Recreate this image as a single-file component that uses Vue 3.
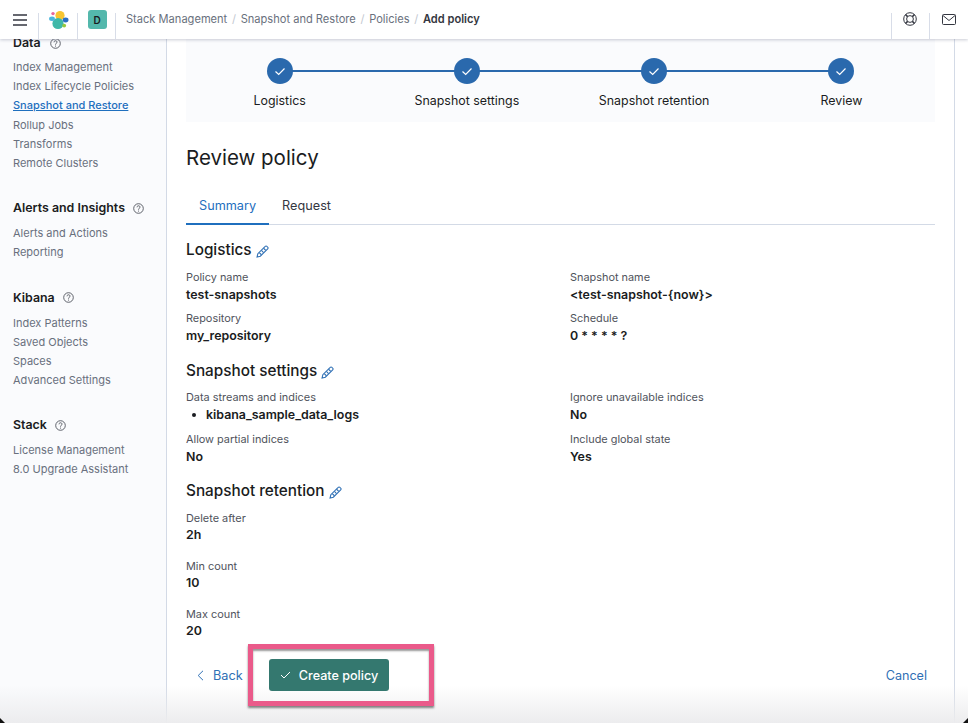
<script setup>
const steps = ['Logistics', 'Snapshot settings', 'Snapshot retention', 'Review']
const nav = [
  { title: 'Data', cls: 'g-data', items: ['Index Management', 'Index Lifecycle Policies', 'Snapshot and Restore', 'Rollup Jobs', 'Transforms', 'Remote Clusters'] },
  { title: 'Alerts and Insights', cls: 'g-alerts', items: ['Alerts and Actions', 'Reporting'] },
  { title: 'Kibana', cls: 'g-kibana', items: ['Index Patterns', 'Saved Objects', 'Spaces', 'Advanced Settings'] },
  { title: 'Stack', cls: 'g-stack', items: ['License Management', '8.0 Upgrade Assistant'] }
]
const crumbs = ['Stack Management', 'Snapshot and Restore', 'Policies']
</script>

<template>
  <div class="page">
    <header class="top">
      <div class="cell burger">
        <svg width="14" height="12" viewBox="0 0 14 12"><path d="M0 1h14M0 6h14M0 11h14" stroke="#343741" stroke-width="1.4" fill="none"/></svg>
      </div>
      <div class="cell logo">
        <svg width="20" height="20" viewBox="0 0 20 20">
          <circle cx="11" cy="5.5" r="4.6" fill="#f7c531"/>
          <circle cx="9" cy="13.5" r="5.6" fill="#3fb8a8"/>
          <ellipse cx="3" cy="8.8" rx="2.9" ry="2.2" fill="#4ab5dc"/>
          <circle cx="4" cy="3.6" r="1.7" fill="#e8669b"/>
          <ellipse cx="16.6" cy="10" rx="2.9" ry="2.4" fill="#2b70c4"/>
          <circle cx="15.2" cy="15.6" r="1.9" fill="#94c83d"/>
        </svg>
      </div>
      <div class="cell space"><span class="avatar">D</span></div>
      <nav class="crumbs">
        <template v-for="c in crumbs" :key="c"><span>{{ c }}</span><i>/</i></template>
        <b>Add policy</b>
      </nav>
      <div class="cell right help">
        <svg width="14" height="14" viewBox="0 0 14 14" fill="none" stroke="#343741" stroke-width="1">
          <circle cx="7" cy="7" r="6.3"/><circle cx="7" cy="7" r="3.4"/>
          <path d="M2.5 2.5l2.1 2.1M11.5 2.5L9.4 4.6M2.5 11.5l2.1-2.1M11.5 11.5L9.4 9.4" stroke-width="1.5"/>
        </svg>
      </div>
      <div class="cell right mail">
        <svg width="14" height="11" viewBox="0 0 14 11" fill="none" stroke="#343741" stroke-width="1">
          <rect x=".5" y=".5" width="13" height="10" rx="1"/><path d="M1 1.5l6 5 6-5"/>
        </svg>
      </div>
    </header>

    <aside class="side">
      <section v-for="g in nav" :key="g.title" class="group" :class="g.cls">
        <h3>{{ g.title }}
          <svg width="11" height="11" viewBox="0 0 11 11" fill="none" stroke="#4f535c" stroke-width=".9">
            <circle cx="5.5" cy="5.5" r="4.8"/><path d="M4 4.3c0-2 3-2 3-.2 0 1.2-1.5 1.2-1.5 2.6"/><path d="M5.5 7.6v1"/>
          </svg>
        </h3>
        <a v-for="i in g.items" :key="i" :class="{ active: i === 'Snapshot and Restore' }">{{ i }}</a>
      </section>
    </aside>

    <main class="main">
      <div class="steps">
        <div v-for="s in steps" :key="s" class="step">
          <span class="dot">
            <svg width="12" height="9" viewBox="0 0 12 9" fill="none"><path d="M1.5 4.5L4.7 7.5 10.5 1.5" stroke="#fff" stroke-width="1.2"/></svg>
          </span>
          <span class="step-label">{{ s }}</span>
        </div>
      </div>

      <h1>Review policy</h1>

      <div class="tabs"><span class="tab on">Summary</span><span class="tab">Request</span></div>

      <h2 class="h-log">Logistics
        <svg class="pen" viewBox="0 0 12 12" width="13" height="13" fill="none" stroke="#2f70b5" stroke-width="1"><path d="M1 11l.7-3L8.500 1.200a1.100 1.100 0 0 1 1.600 0l.7.7a1.100 1.100 0 0 1 0 1.600L4 10.300z"/><path d="M3 7l2 2M5 5l2 2M7 3l2 2"/></svg>
      </h2>
      <div class="grid">
        <div><label>Policy name</label><strong>test-snapshots</strong></div>
        <div><label>Snapshot name</label><strong>&lt;test-snapshot-{now}&gt;</strong></div>
        <div><label>Repository</label><strong>my_repository</strong></div>
        <div><label>Schedule</label><strong>0 * * * * ?</strong></div>
      </div>

      <h2 class="h-set">Snapshot settings
        <svg class="pen" viewBox="0 0 12 12" width="13" height="13" fill="none" stroke="#2f70b5" stroke-width="1"><path d="M1 11l.7-3L8.500 1.200a1.100 1.100 0 0 1 1.600 0l.7.7a1.100 1.100 0 0 1 0 1.600L4 10.300z"/><path d="M3 7l2 2M5 5l2 2M7 3l2 2"/></svg>
      </h2>
      <div class="grid second">
        <div><label>Data streams and indices</label><ul><li>kibana_sample_data_logs</li></ul></div>
        <div><label>Ignore unavailable indices</label><strong>No</strong></div>
        <div><label>Allow partial indices</label><strong>No</strong></div>
        <div><label>Include global state</label><strong>Yes</strong></div>
      </div>

      <h2 class="h-ret">Snapshot retention
        <svg class="pen" viewBox="0 0 12 12" width="13" height="13" fill="none" stroke="#2f70b5" stroke-width="1"><path d="M1 11l.7-3L8.500 1.200a1.100 1.100 0 0 1 1.600 0l.7.7a1.100 1.100 0 0 1 0 1.600L4 10.300z"/><path d="M3 7l2 2M5 5l2 2M7 3l2 2"/></svg>
      </h2>
      <div class="stack">
        <div><label>Delete after</label><strong>2h</strong></div>
        <div><label>Min count</label><strong>10</strong></div>
        <div><label>Max count</label><strong>20</strong></div>
      </div>

      <footer class="foot">
        <a class="back">
          <svg width="7" height="11" viewBox="0 0 7 11" fill="none"><path d="M6 .8L1.200 5.500 6 10.200" stroke="#2f70b5" stroke-width="1"/></svg>
          Back
        </a>
        <div class="frame">
          <button class="create">
            <svg width="11" height="8" viewBox="0 0 11 8" fill="none"><path d="M1 4l3 3 6-6" stroke="#fff" stroke-width="1"/></svg>
            Create policy
          </button>
        </div>
        <a class="cancel">Cancel</a>
      </footer>
    </main>

    <div class="rail"></div>
    <div class="fade"></div>
    <span class="corner left"></span>
    <span class="corner right-c"></span>
  </div>
</template>

<style>
html, body { margin: 0; background: #fff; }
</style>

<style scoped>
.page {
  position: relative;
  width: 968px;
  height: 723px;
  overflow: hidden;
  display: flex;
  background: #fff;
  font-family: Inter, "Liberation Sans", sans-serif;
  color: #1a1c21;
}
.top {
  position: absolute;
  z-index: 3;
  left: 0; top: 0; right: 0;
  height: 39px;
  background: #fff;
  display: flex;
  align-items: stretch;
  box-shadow: 0 1px 3px rgba(80, 90, 120, .3);
}
.cell { display: flex; align-items: center; justify-content: center; position: relative; }
.cell::after {
  content: ""; position: absolute; right: 0; top: 13px; bottom: 0;
  border-right: 1px solid #d8dde8;
}
.burger { width: 39px; }
.logo { width: 39px; }
.space { width: 38px; }
.right::after { right: auto; left: 0; }
.help { width: 38px; margin-left: auto; }
.mail { width: 39px; }
.mail svg { margin-top: -1px; }
.help svg { margin-top: -1px; }
.avatar {
  width: 19px; height: 19px; margin-top: 0; border-radius: 3px;
  background: #54b8ac; color: #1a1c21;
  font-size: 10px; font-weight: 600;
  display: flex; align-items: center; justify-content: center;
}
.crumbs {
  display: flex; align-items: center; padding-left: 10px;
  font-size: 11.100px; color: #69707d; padding-bottom: 1px;
}
.crumbs i { font-style: normal; color: #c2c7d0; margin: 0 4.700px; }
.crumbs b { color: #343741; font-weight: 600; }

.side {
  width: 167px; flex: none; box-sizing: border-box; height: 723px;
  background: #fafbfd; border-right: 1px solid #d3dae6;
  padding: 34px 0 0 13px;
}
.group h3 {
  margin: 0; font-size: 12.400px; line-height: 18px; font-weight: 600;
  display: flex; align-items: center; gap: 8px; color: #1a1c21;
}
.group a {
  display: block; font-size: 11px; line-height: 19.200px; color: #69707d;
}
.group h3 + a { margin-top: 7px; }
.group a.active { color: #1f6fbe; text-decoration: underline; font-weight: 500; }
.g-alerts { margin-top: 26px; }
.g-kibana { margin-top: 26px; }
.g-stack { margin-top: 26px; }
.g-stack h3 + a { margin-top: 6.500px; }
.g-data h3 { gap: 9px; }
.g-data h3 + a { margin-top: 6px; }

.main {
  width: 749px; flex: none; margin-left: 19px; padding-top: 39px;
  box-sizing: border-box; position: relative; z-index: 2;
}
.steps {
  display: flex; height: 83px; background: #fafbfd; box-sizing: border-box; padding-top: 19px;
}
.step {
  flex: 1; display: flex; flex-direction: column; align-items: center; position: relative;
}
.step + .step::before {
  content: ""; position: absolute; top: 12px; right: 50%; width: 100%; height: 2px; background: #2a69ad;
}
.dot {
  width: 26px; height: 26px; border-radius: 50%; background: #2a69ad; position: relative; z-index: 1;
  display: flex; align-items: center; justify-content: center;
}
.step-label { font-size: 12.400px; line-height: 18px; margin-top: 8px; color: #1a1c21; }
h1 { margin: 22px 0 0; font-size: 20.500px; line-height: 28px; font-weight: 400; color: #1a1c21; }
.tabs {
  display: flex; margin-top: 14px; height: 38px; border-bottom: 1px solid #d3dae6; box-sizing: content-box;
}
.tab { padding: 1px 13px 0; font-size: 12.700px; line-height: 37px; color: #343741; font-weight: 400; height: 38px; box-sizing: border-box; }
.tab.on { color: #1f6fbe; border-bottom: 2px solid #1f6fbe; height: 39px; }
h2 {
  margin: 0; font-size: 15.300px; line-height: 20px; font-weight: 500; color: #1a1c21;
  display: flex; align-items: center; gap: 4px;
}
.pen { margin-top: 3px; }
.h-log { margin-top: 15px; }
.h-set { margin-top: 16px; }
.h-ret { margin-top: 15px; }
.grid { display: grid; grid-template-columns: 384px 1fr; row-gap: 5px; margin-top: 8px; }
.grid.second { margin-top: 7px; row-gap: 6px; }
label { display: block; font-size: 10.900px; line-height: 18px; color: #4f535c; }
strong, li { display: block; font-size: 12.400px; line-height: 18px; font-weight: 600; color: #1a1c21; }
ul { margin: 0; padding: 0 0 0 20px; list-style: none; }
li { position: relative; }
li::before { content: ""; position: absolute; left: -14px; top: 7px; width: 4px; height: 4px; border-radius: 50%; background: #1a1c21; }
.stack { margin-top: 8px; display: flex; flex-direction: column; gap: 13px; }
.stack strong { margin-top: -1px; }
.foot { display: flex; align-items: center; margin-top: 4px; position: relative; }
.back { display: flex; align-items: center; gap: 9px; margin-left: 11px; color: #2f70b5; font-size: 12.700px; font-weight: 400; width: 51px; }
.frame {
  box-sizing: border-box; width: 186px; height: 62px; margin-left: 0; border: 5px solid #ea5a8a;
  box-shadow: 0 2px 2px rgba(50, 50, 50, .6), inset 0 2px 2px rgba(50, 50, 50, .5);
  display: flex; align-items: center; padding-left: 16px;
}
.create {
  width: 120px; height: 32px; border: 0; border-radius: 3px; background: #34786f; color: #fff;
  font: 500 12.600px Inter, "Liberation Sans", sans-serif;
  display: flex; align-items: center; justify-content: center; gap: 8px; padding: 0;
}
.cancel { margin-left: auto; margin-right: 8px; color: #2f70b5; font-size: 12.600px; }
.rail { position: absolute; left: 954px; top: 39px; bottom: 0; border-left: 1px solid #d3dae6; }
.fade {
  position: absolute; left: 0; right: 0; bottom: 0; height: 38px; pointer-events: none; z-index: 1;
  background: linear-gradient(to bottom, rgba(236, 236, 238, 0), rgba(236, 236, 238, 1));
}
.corner { position: absolute; bottom: 0; width: 5px; height: 5px; background: #111; z-index: 4; }
.corner.left { left: 0; clip-path: polygon(0 0, 100% 100%, 0 100%); }
.corner.right-c { right: 0; clip-path: polygon(100% 0, 100% 100%, 0 100%); }
</style>
